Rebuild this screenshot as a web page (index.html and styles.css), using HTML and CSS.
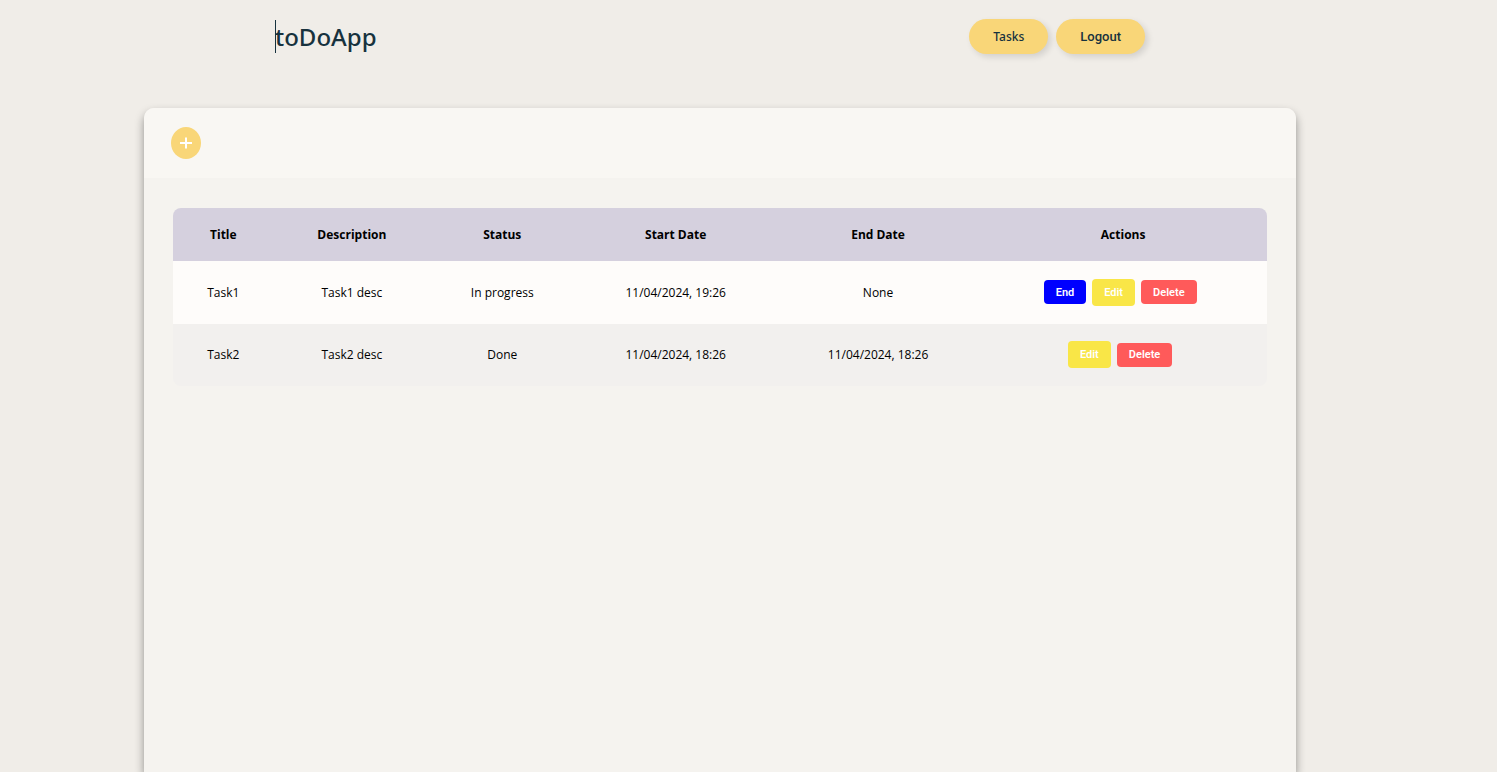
FILE: index.html
```html
<!DOCTYPE html>
<html lang="en">
<head>
<meta charset="utf-8">
<title>toDoApp</title>
<link rel="stylesheet" href="styles.css">
</head>
<body>
<div class="page">
  <header class="header">
    <h1 class="logo"><span class="caret"></span>toDoApp</h1>
    <nav class="nav">
      <a class="pill" href="#tasks">Tasks</a>
      <button class="pill pill-button" type="button">Logout</button>
    </nav>
  </header>
  <main class="panel">
    <div class="toolbar">
      <button class="add" type="button" aria-label="Add task">
        <svg width="12" height="12" viewBox="0 0 12 12" aria-hidden="true"><path d="M6 0.5V11.5M0 6H12" stroke="#fff" stroke-width="2" fill="none"/></svg>
      </button>
    </div>
    <div class="content">
      <table class="tasks">
        <colgroup>
          <col class="c-title"><col class="c-desc"><col class="c-status"><col class="c-date"><col class="c-date"><col>
        </colgroup>
        <thead>
          <tr><th>Title</th><th>Description</th><th>Status</th><th>Start Date</th><th>End Date</th><th>Actions</th></tr>
        </thead>
        <tbody>
          <tr>
            <td>Task1</td><td>Task1 desc</td><td>In progress</td><td>11/04/2024, 19:26</td><td>None</td>
            <td><div class="actions"><button class="btn end" type="button">End</button><button class="btn edit" type="button">Edit</button><button class="btn delete" type="button">Delete</button></div></td>
          </tr>
          <tr>
            <td>Task2</td><td>Task2 desc</td><td>Done</td><td>11/04/2024, 18:26</td><td>11/04/2024, 18:26</td>
            <td><div class="actions"><button class="btn edit" type="button">Edit</button><button class="btn delete" type="button">Delete</button></div></td>
          </tr>
        </tbody>
      </table>
    </div>
  </main>
</div>
</body>
</html>
```

FILE: styles.css
```css
* { box-sizing: border-box; }
body {
  margin: 0;
  background: #f0ede8;
  color: #000;
  font-family: "Open Sans", "Noto Sans", sans-serif;
  font-size: 12px;
}
.page {
  display: flex;
  flex-direction: column;
  min-height: 100vh;
  padding-right: 57px;
}
.header {
  display: flex;
  align-items: center;
  justify-content: space-between;
  padding: 19px 295px 19px 275px;
}
.logo {
  position: relative;
  margin: 0;
  color: #17323e;
  font-family: "Noto Sans", sans-serif;
  font-size: 24px;
  font-weight: 500;
  line-height: 35px;
}
.caret {
  position: absolute;
  left: 0;
  top: 1px;
  width: 1px;
  height: 33px;
  background: #17323e;
}
.nav { display: flex; gap: 8px; }
.pill {
  height: 35px;
  padding: 0 24px;
  border: 0;
  border-radius: 50px;
  background: #f9d678;
  box-shadow: 3px 3px 6px rgba(0, 0, 0, 0.12);
  color: #17323e;
  font-family: "Noto Sans", sans-serif;
  font-size: 12px;
  font-weight: 500;
  line-height: 35px;
  text-decoration: none;
}
.pill-button { font-family: Roboto, sans-serif; font-size: 13px; }
.panel {
  flex: 1;
  width: 80%;
  margin: 35px auto 0;
  border-radius: 10px 10px 0 0;
  background: #f5f3ef;
  box-shadow: 0 5px 10px rgba(0, 0, 0, 0.4);
  overflow: hidden;
}
.toolbar {
  display: flex;
  align-items: center;
  height: 70px;
  padding: 0 27px;
  background: #f9f7f3;
}
.add {
  display: flex;
  align-items: center;
  justify-content: center;
  width: 30px;
  height: 32px;
  padding: 0;
  border: 0;
  border-radius: 50%;
  background: #f9d678;
}
.content { padding: 30px 29px; }
.tasks {
  width: 100%;
  table-layout: fixed;
  border-collapse: collapse;
  border-radius: 8px;
  overflow: hidden;
  text-align: center;
}
.c-title { width: 9.2%; }
.c-desc { width: 14.3%; }
.c-status { width: 13.2%; }
.c-date { width: 18.5%; }
.tasks th { height: 53px; padding: 0; background: #d5d0de; font-weight: 700; }
.tasks td { height: 62px; padding: 0 0 1px; background: #f2f0ee; }
.tasks tbody tr:first-child td { height: 63px; background: #fefcfa; }
.actions {
  display: flex;
  align-items: center;
  justify-content: center;
  gap: 6px;
  padding-right: 6px;
}
.btn {
  height: 24px;
  padding: 0 12px;
  border: 0;
  border-radius: 4px;
  color: #fff;
  font-family: Roboto, "Liberation Sans", sans-serif;
  font-size: 11px;
  font-weight: 600;
}
.end { background: #00f; }
.edit { height: 27px; background: #f9e647; }
.delete { background: #ff5a5a; }
```
